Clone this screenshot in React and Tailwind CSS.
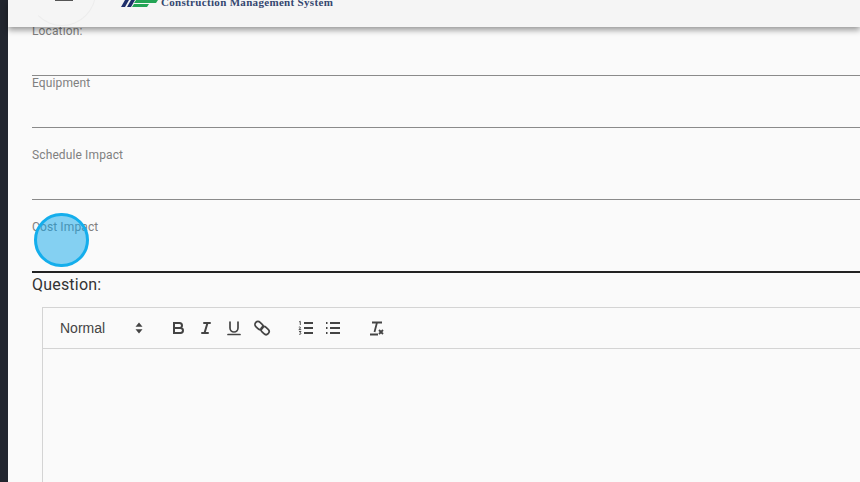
export default function App() {
  const Field = ({ label, h, mt, line = "border-b border-[#8a8a8a]" }) => (
    <div className={`${h} ${mt} ${line} text-[12px] leading-[14px] tracking-[0.12px] text-[#808080]`}>{label}</div>
  );
  const I = "w-[18px] h-[18px] text-[#444]";
  return (
    <div className="relative w-[860px] h-[482px] overflow-hidden flex bg-[#fafafa] font-['Roboto',sans-serif]">
      <div className="w-2 bg-[#22262f] shrink-0" />
      <div className="flex-1 min-w-0 flex flex-col">
        <header className="relative z-10 h-[27px] shrink-0 bg-[#f5f5f5] shadow-[0_3px_6px_rgba(0,0,0,0.4)] flex items-end overflow-hidden">
          <div className="relative w-[100px] h-[27px] shrink-0 overflow-hidden">
            <div className="absolute left-[20px] top-[-42px] w-[68px] h-[68px] rounded-full border border-[#ececec] border-l-transparent" />
            <div className="absolute left-[47px] top-0 w-[18px] h-px bg-[#555]" />
          </div>
          <svg width="38" height="8" viewBox="0 0 38 8" className="ml-[12px] mb-[20px] shrink-0">
            <path d="M5 1h4L5 8H1zM11 1h4l-4 7H7z" fill="#1f2f6b" />
            <path d="M16 1h22l-2 3H14zM14 5h15l-2 3H12z" fill="#23a455" />
          </svg>
          <div className="ml-[3px] mb-[19px] text-[11px] leading-[11px] font-bold text-[#34466f] font-['Liberation_Serif',serif] whitespace-nowrap tracking-[0.32px]">
            Construction Management System
          </div>
        </header>
        <main className="pl-6 flex flex-col">
          <Field label="Location:" h="h-[52px]" mt="mt-[-3px]" />
          <Field label="Equipment" h="h-[52px]" mt="mt-0" />
          <Field label="Schedule Impact" h="h-[52px]" mt="mt-[20px]" />
          <Field label="Cost Impact" h="h-[53px]" mt="mt-[20px]" line="border-b-2 border-[#222]" />
          <div className="mt-[2px] text-[16px] leading-[20px] tracking-[0.2px] text-[#333]">Question:</div>
          <div className="ml-[10px] mt-[12px] h-[200px] border-l border-t border-[#d4d4d4]">
            <div className="h-[41px] border-b border-[#d4d4d4] flex items-center font-['Liberation_Sans',sans-serif]">
              <span className="ml-[17px] text-[14px] text-[#444] w-[75px]">Normal</span>
              <svg width="8" height="12" viewBox="0 0 8 12" className="shrink-0"><path d="M4 0.5l3.5 4.2h-7zM4 11.5l3.5-4.2h-7z" fill="#444" /></svg>
              <svg viewBox="0 0 18 18" className={`${I} ml-[26px]`} fill="none" stroke="currentColor" strokeWidth="2"><path d="M5 4h5.5a2.5 2.5 0 010 5H5zM5 9h6.5a2.5 2.5 0 010 5H5z" /></svg>
              <svg viewBox="0 0 18 18" className={`${I} ml-[10px]`} fill="none" stroke="currentColor" strokeWidth="2" strokeLinecap="round"><path d="M7 4h6M5 14h6M10.5 4l-3 10" /></svg>
              <svg viewBox="0 0 18 18" className={`${I} ml-[10px]`} fill="none" stroke="currentColor" strokeWidth="1.7" strokeLinecap="round"><path d="M5 3v6a4 4 0 008 0V3M3 15.5h12" /></svg>
              <svg viewBox="0 0 18 18" className={`${I} ml-[10px]`} fill="none" stroke="currentColor" strokeWidth="1.7"><rect x="1.5" y="3.5" width="9" height="6" rx="3" transform="rotate(45 6 6.5)" /><rect x="7.5" y="8.5" width="9" height="6" rx="3" transform="rotate(45 12 11.5)" /></svg>
              <svg viewBox="0 0 18 18" className={`${I} ml-[26px]`} fill="none" stroke="currentColor" strokeWidth="2"><path d="M7 4h9M7 9h9M7 14h9" /><path d="M2 3l1.3-.7V6M1.8 8.2c1.5-.8 2.4.4 1 1.6l-1 .8h2.4M2 12.5h2l-1 1.2c1.4 0 1.4 2-1 1.5" strokeWidth="0.9" /></svg>
              <svg viewBox="0 0 18 18" className={`${I} ml-[9px]`} fill="none" stroke="currentColor" strokeWidth="2"><path d="M6 4h10M6 9h10M6 14h10" /><path d="M2 4h1.5M2 9h1.5M2 14h1.5" /></svg>
              <svg viewBox="0 0 18 18" className={`${I} ml-[25px]`} fill="none" stroke="currentColor" strokeWidth="1.8"><path d="M5 3.5h10M10 3.5L7.5 13M3 15.5h8" /><path d="M12 11l4 4M16 11l-4 4" /></svg>
            </div>
          </div>
        </main>
      </div>
      <div className="absolute left-[34px] top-[213px] w-[55px] h-[54px] rounded-full bg-[#0ea5e9]/50 border-[3px] border-[#14aeec]" />
    </div>
  );
}
